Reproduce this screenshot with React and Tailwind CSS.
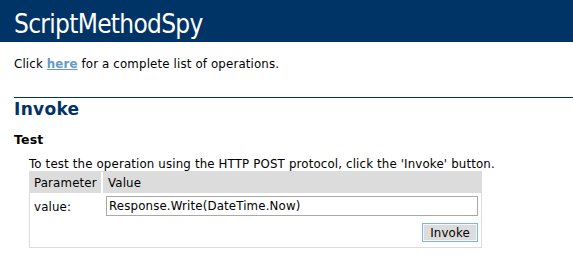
export default function App() {
  return (
    <div className="min-h-[258px] w-[573px] bg-white font-['DejaVu_Sans',Verdana,sans-serif] text-black">
      <div className="h-[42px] bg-[#003366] pl-[14px] pt-[9px] font-['DejaVu_Sans_Condensed','DejaVu_Sans',sans-serif] text-[26px] leading-[30px] tracking-[-0.7px] text-white">
        ScriptMethodSpy
      </div>
      <div className="pl-[14px] text-[11.8px] leading-[14px] tracking-[0.15px]">
        <p className="mt-[15px]">
          Click{" "}
          <a href="#" className="font-bold text-[#6699cc] underline">
            here
          </a>{" "}
          for a complete list of operations.
        </p>
        <h2 className="mt-[26px] border-t border-[#003366] pt-[1px] text-[17px] font-bold leading-[20px] tracking-[0.3px] text-[#003366]">
          Invoke
        </h2>
        <h3 className="mt-[13px] text-[12.5px] font-bold leading-[15px]">Test</h3>
        <div className="pl-[15px]">
          <p className="mt-[10px]">
            To test the operation using the HTTP POST protocol, click the 'Invoke' button.
          </p>
          <div className="h-[77px] w-[453px] border border-[#dcdcdc]">
            <div className="flex h-[21px] bg-[#dcdcdc]">
              <div className="w-[73px] border-r-2 border-white pl-[4px] pt-[4px]">Parameter</div>
              <div className="pl-[5px] pt-[4px]">Value</div>
            </div>
            <div className="flex items-start pt-[3px]">
              <div className="w-[76px] pl-[4px] pt-[4px]">value:</div>
              <input
                type="text"
                defaultValue="Response.Write(DateTime.Now)"
                className="h-[20px] w-[372px] border border-[#a9a9a9] bg-white px-[2px] font-['DejaVu_Sans',sans-serif] text-[11.8px] tracking-[0.15px] text-black outline-none"
              />
            </div>
            <div className="flex justify-end pr-[3px] pt-[7px]">
              <button className="h-[19px] w-[56px] border border-[#7eb4ea] bg-[#dcdcdc] font-['DejaVu_Sans',sans-serif] text-[11.8px] leading-[16px] text-black shadow-[inset_0_0_0_1px_#f4f8fc]">
                Invoke
              </button>
            </div>
          </div>
        </div>
      </div>
    </div>
  );
}
